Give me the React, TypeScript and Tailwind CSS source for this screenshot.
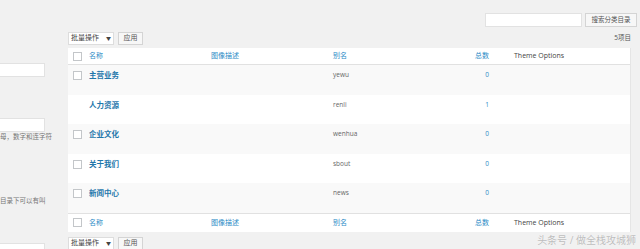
const rows = [
  { name: "主营业务", slug: "yewu", count: "0", check: true },
  { name: "人力资源", slug: "renli", count: "1", check: false },
  { name: "企业文化", slug: "wenhua", count: "0", check: true },
  { name: "关于我们", slug: "sbout", count: "0", check: true },
  { name: "新闻中心", slug: "news", count: "0", check: true },
]

const cols = "grid grid-cols-[21px_122px_122px_127px_29px_1fr]"

function Checkbox() {
  return <span className="block w-[9px] h-[9px] bg-white border border-[#c3c6c9] ml-[5px]" />
}

function HeadRow({ top }: { top?: boolean }) {
  return (
    <div
      className={`${cols} items-center bg-white text-[7px] ${
        top ? "h-[17px] border-b border-[#e1e1e1]" : "h-[19px] border-t border-[#e1e1e1]"
      }`}
    >
      <Checkbox />
      <span className="text-[#2b8bc6]">名称</span>
      <span className="text-[#2b8bc6]">图像描述</span>
      <span className="text-[#2b8bc6]">别名</span>
      <span className="text-right text-[#2b8bc6]">总数</span>
      <span className="pl-[25px] text-[#444]">Theme Options</span>
    </div>
  )
}

function BulkActions() {
  return (
    <div className="flex items-center gap-[4px] text-[7px]">
      <div className="w-[46px] h-[13px] bg-white border border-[#ddd] flex items-center justify-between px-[2px] text-[#444]">
        <span>批量操作</span>
        <span className="text-[5px]">▼</span>
      </div>
      <div className="w-[25px] h-[13px] bg-[#f7f7f7] border border-[#d4d4d4] flex items-center justify-center text-[#555]">
        应用
      </div>
    </div>
  )
}

export default function App() {
  return (
    <div
      className="relative w-[640px] h-[249px] overflow-hidden bg-[#f1f1f1]"
      style={{ fontFamily: '"Open Sans", "Noto Sans CJK SC", sans-serif' }}
    >
      <div className="flex">
        {/* left form column, cut off by the crop */}
        <div className="w-[68px] shrink-0 flex flex-col text-[6.5px] leading-[8px] text-[#777]">
          <div className="mt-[63px] w-[45px] h-[14px] bg-white border-y border-r border-[#e2e2e2]" />
          <div className="mt-[41px] w-[45px] h-[14px] bg-white border-y border-r border-[#e2e2e2]" />
          <span className="mt-[1px] whitespace-nowrap">母，数字和连字符</span>
          <span className="mt-[56px] whitespace-nowrap">目录下可以有叫</span>
          <div className="mt-[38px] w-[45px] h-[14px] bg-white border-y border-r border-[#e2e2e2]" />
        </div>

        <div className="w-[569px] shrink-0 flex flex-col pt-[13px]">
          <div className="flex justify-end gap-[3px]">
            <div className="w-[97px] h-[14px] bg-white border border-[#e2e2e2]" />
            <div className="w-[52px] h-[14px] bg-[#f7f7f7] border border-[#d4d4d4] flex items-center justify-center text-[6.5px] text-[#555]">
              搜索分类目录
            </div>
          </div>

          <div className="mt-[5px] w-[563px] flex items-center justify-between">
            <BulkActions />
            <span className="text-[6.5px] text-[#555] -mt-[2px]">5项目</span>
          </div>

          <div className="mt-[3px] w-[563px] border-r border-[#e5e5e5]">
            <HeadRow top />
            {rows.map((r, i) => (
              <div
                key={r.slug}
                className={`${cols} h-[29.6px] items-start pt-[5px] leading-[10px] ${
                  i % 2 === 0 ? "bg-[#f9f9f9]" : "bg-white"
                }`}
              >
                <div className="pt-[1px]">{r.check ? <Checkbox /> : null}</div>
                <span className="text-[7.5px] font-bold text-[#1f77ab]">{r.name}</span>
                <span />
                <span className="text-[6.5px] text-[#666]">{r.slug}</span>
                <span className="text-right text-[6.5px] text-[#2b8bc6]">{r.count}</span>
                <span />
              </div>
            ))}
            <HeadRow />
          </div>

          <div className="mt-[5px]">
            <BulkActions />
          </div>
        </div>
      </div>

      <span
        className="absolute right-[4px] bottom-[1px] text-[10px] text-[#bdbdbd] whitespace-nowrap"
        style={{ textShadow: "0 0 1px #fff" }}
      >
        头条号 / 做全栈攻城狮
      </span>
    </div>
  )
}
